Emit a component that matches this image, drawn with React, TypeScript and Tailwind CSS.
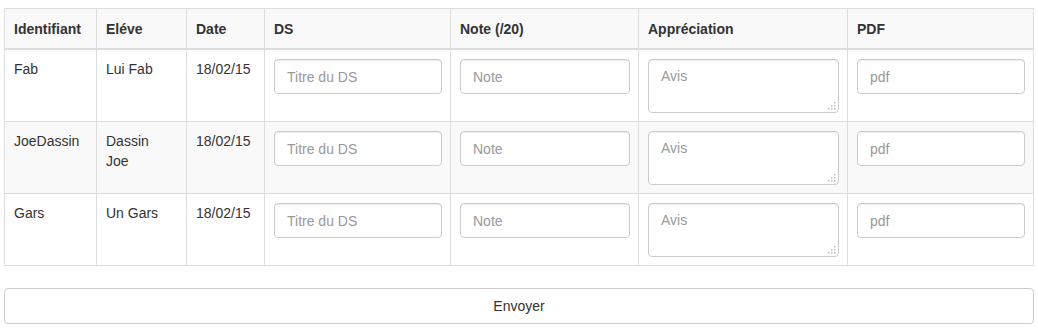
import React from "react";

type Eleve = { id: string; nom: React.ReactNode; date: string };

const eleves: Eleve[] = [
  { id: "Fab", nom: "Lui Fab", date: "18/02/15" },
  {
    id: "JoeDassin",
    nom: (
      <>
        Dassin
        <br />
        Joe
      </>
    ),
    date: "18/02/15",
  },
  { id: "Gars", nom: "Un Gars", date: "18/02/15" },
];

const fieldCls =
  "block w-full px-3 py-1.5 text-[14px] leading-5 text-[#555] bg-white border border-[#ccc] rounded shadow-[inset_0_1px_1px_rgba(0,0,0,0.075)] placeholder:text-[#999] outline-none";

const th =
  "border border-[#ddd] border-b-2 pl-[9px] pr-2 pt-[10px] pb-[9px] text-left align-bottom font-bold";
const td = "border border-[#ddd] pl-[9px] pr-2 pt-[9px] pb-2 align-top";

// Dotted resize grip drawn in the textarea's corner
function Grip() {
  return (
    <svg
      className="pointer-events-none absolute right-[3px] bottom-[3px]"
      width="9"
      height="9"
      viewBox="0 0 9 9"
    >
      <g fill="#bdbdbd">
        <rect x="7" y="1" width="1.5" height="1.5" />
        <rect x="4" y="4" width="1.5" height="1.5" />
        <rect x="7" y="4" width="1.5" height="1.5" />
        <rect x="1" y="7" width="1.5" height="1.5" />
        <rect x="4" y="7" width="1.5" height="1.5" />
        <rect x="7" y="7" width="1.5" height="1.5" />
      </g>
    </svg>
  );
}

export default function App() {
  return (
    <div
      className="px-1 pt-2 text-[14px] leading-5 text-[#333] bg-white min-h-screen"
      style={{ fontFamily: '"Liberation Sans", Arial, Helvetica, sans-serif' }}
    >
      <form>
        <table className="w-full border-collapse table-fixed">
          <colgroup>
            <col className="w-[92px]" />
            <col className="w-[90px]" />
            <col className="w-[78px]" />
            <col className="w-[186px]" />
            <col className="w-[188px]" />
            <col className="w-[209px]" />
            <col />
          </colgroup>
          <thead>
            <tr className="bg-[#f9f9f9]">
              <th className={th}>Identifiant</th>
              <th className={th}>Eléve</th>
              <th className={th}>Date</th>
              <th className={th}>DS</th>
              <th className={th}>Note (/20)</th>
              <th className={th}>Appréciation</th>
              <th className={th}>PDF</th>
            </tr>
          </thead>
          <tbody>
            {eleves.map((e, i) => (
              <tr key={e.id} className={i % 2 === 1 ? "bg-[#f9f9f9]" : "bg-white"}>
                <td className={td}>{e.id}</td>
                <td className={td}>{e.nom}</td>
                <td className={td}>{e.date}</td>
                <td className={td}>
                  <input type="text" placeholder="Titre du DS" className={`${fieldCls} h-[35px]`} />
                </td>
                <td className={td}>
                  <input type="text" placeholder="Note" className={`${fieldCls} h-[35px]`} />
                </td>
                <td className={td}>
                  <div className="relative">
                    <textarea
                      rows={2}
                      placeholder="Avis"
                      className={`${fieldCls} h-[54px] resize-none`}
                    />
                    <Grip />
                  </div>
                </td>
                <td className={td}>
                  <input type="text" placeholder="pdf" className={`${fieldCls} h-[35px]`} />
                </td>
              </tr>
            ))}
          </tbody>
        </table>
        <button
          type="button"
          className="mt-[22px] block w-full h-[36px] bg-white border border-[#ccc] rounded text-[14px] leading-5 text-[#333]"
        >
          Envoyer
        </button>
      </form>
    </div>
  );
}
